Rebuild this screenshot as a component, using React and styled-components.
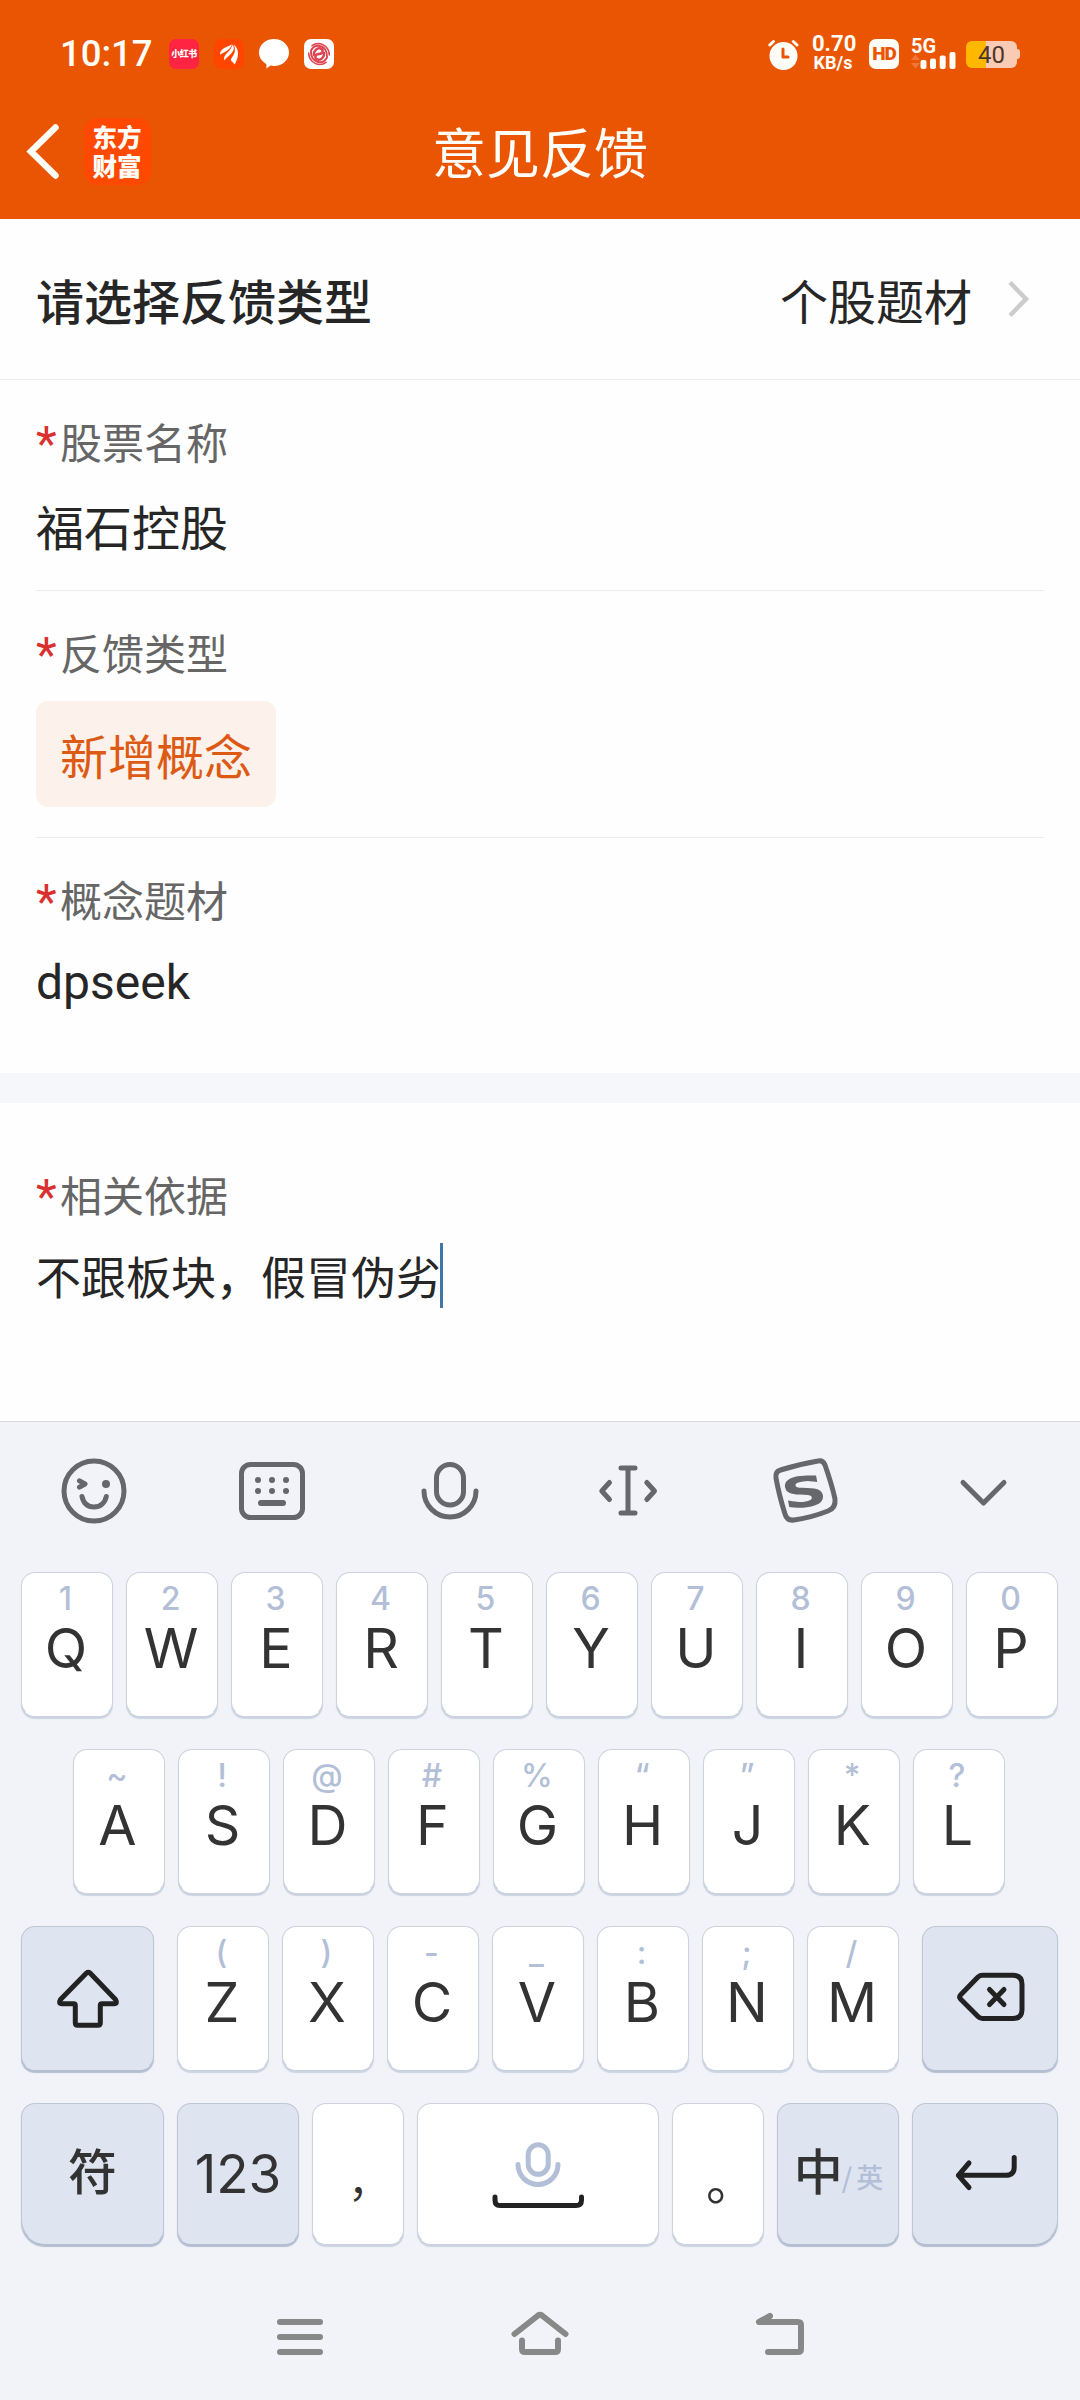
import styled, { createGlobalStyle, css } from 'styled-components';

const cjk = `'Noto Sans CJK SC', 'Noto Sans', sans-serif`;
const latin = `Roboto, 'Noto Sans CJK SC', sans-serif`;
const keyFont = `Inter, 'Noto Sans CJK SC', sans-serif`;

const GlobalStyle = createGlobalStyle`
  * {
    box-sizing: border-box;
  }
  body {
    margin: 0;
    font-family: ${cjk};
    background: #fff;
    color: #262626;
  }
  svg {
    display: block;
    flex: none;
  }
`;

const Screen = styled.div`
  display: flex;
  flex-direction: column;
  width: 1080px;
  height: 2400px;
  overflow: hidden;
  background: #fefefe;
`;

/* ---------- header ---------- */

const Header = styled.header`
  height: 219px;
  background: #ea5504;
  color: #fffdf8;
`;

const StatusBar = styled.div`
  display: flex;
  align-items: center;
  justify-content: space-between;
  height: 108px;
  padding: 0 60px 0 60px;
  font-family: ${latin};
`;

const StatusGroup = styled.div`
  display: flex;
  align-items: center;
  gap: ${({ $gap }) => $gap}px;
`;

const Clock = styled.span`
  width: 94px;
  font-size: 36.5px;
  font-weight: 500;
  line-height: 40px;
  white-space: nowrap;
`;

const AppBadge = styled.span`
  display: flex;
  align-items: center;
  justify-content: center;
  width: 30px;
  height: 30px;
  border-radius: 7px;
  background: ${({ $bg }) => $bg};
  font-family: ${cjk};
  font-size: 9px;
  font-weight: 900;
  letter-spacing: -0.5px;
  line-height: 30px;
  white-space: nowrap;
`;

const NetSpeed = styled.div`
  width: 42px;
  margin-top: -2px;
  font-size: 22px;
  font-weight: 700;
  line-height: 20px;
  text-align: center;
  white-space: nowrap;
`;

const NetUnit = styled.div`
  font-size: 18px;
  line-height: 18px;
`;

const HdBadge = styled(AppBadge)`
  font-family: ${latin};
  font-size: 19px;
  letter-spacing: -1px;
  color: #ea5504;
`;

const Signal = styled.div`
  width: 46px;
  height: 30px;
  font-size: 20px;
  font-weight: 700;
  line-height: 15px;
`;

const Battery = styled.div`
  display: flex;
  align-items: center;
`;

const BatteryBody = styled.div`
  width: 51px;
  height: 27px;
  border-radius: 6px;
  background: linear-gradient(90deg, #ffb800 40%, #f9cbb4 40%);
  color: #4d3629;
  font-size: 24px;
  line-height: 29px;
  text-align: center;
`;

const BatteryTip = styled.div`
  width: 3px;
  height: 10px;
  border-radius: 0 3px 3px 0;
  background: #f9cbb4;
`;

const NavBar = styled.div`
  display: grid;
  grid-template-columns: 1fr auto 1fr;
  align-items: center;
  height: 86px;
  padding: 0 24px;
`;

const NavLeft = styled.div`
  display: flex;
  align-items: center;
  gap: 20px;
`;

const Brand = styled.div`
  width: 67px;
  height: 67px;
  padding: 6px 1px 0 0;
  border-radius: 14px;
  background: #ff4800;
  font-family: ${latin};
  font-size: 24.5px;
  font-weight: 900;
  line-height: 29px;
  text-align: center;
`;

const Title = styled.h1`
  margin: 0;
  font-size: 54px;
  font-weight: 400;
  line-height: 80px;
`;

/* ---------- form ---------- */

const Form = styled.main`
  flex: 1;
`;

const TypeRow = styled.div`
  display: flex;
  align-items: center;
  height: 161px;
  padding: 0 45px 0 36px;
  border-bottom: 1px solid #ececec;
  font-size: 48px;
  line-height: 72px;
`;

const TypeName = styled.span`
  flex: 1;
  font-weight: 500;
`;

const TypeValue = styled.span`
  margin-right: 31px;
`;

const Field = styled.section`
  margin: 0 36px;
  padding: ${({ $pad }) => $pad};
  border-bottom: ${({ $line }) => ($line ? '1px solid #ececec' : 'none')};
`;

const Label = styled.div`
  display: flex;
  height: 60px;
  font-size: 42px;
  line-height: 60px;
  color: #666;

  &::before {
    content: '*';
    width: 24px;
    font-family: ${latin};
    font-size: 48px;
    line-height: 66px;
    color: #d93030;
  }
`;

const Value = styled.div`
  margin-top: 18px;
  font-size: 48px;
  line-height: 72px;
  font-family: ${({ $latin }) => ($latin ? latin : cjk)};
`;

const Chip = styled.button`
  display: block;
  height: 106px;
  margin: 19px 0 0;
  padding: 0 24px;
  border: none;
  border-radius: 12px;
  background: #fdf1eb;
  color: #dc5a14;
  font-family: ${cjk};
  font-size: 48px;
  line-height: 106px;
`;

const Band = styled.div`
  height: 30px;
  background: #f6f7fa;
`;

const Reason = styled.div`
  display: flex;
  height: 65px;
  margin-top: 19px;
  font-size: 45px;
  line-height: 65px;
`;

const Caret = styled.span`
  width: 3px;
  height: 65px;
  margin-left: -1px;
  background: #4275a8;
`;

/* ---------- keyboard ---------- */

const Keyboard = styled.div`
  height: 979px;
  border-top: 1px solid #d8dadf;
  background: #f1f3f8;
  font-family: ${keyFont};
  color: #333;
`;

const Toolbar = styled.div`
  display: grid;
  grid-template-columns: repeat(6, 178px);
  justify-items: center;
  height: 150px;
  padding: 33px 6px 0 5px;
`;

const Rows = styled.div`
  display: flex;
  flex-direction: column;
  gap: 33px;
  padding: 0 22px 0 21px;
`;

const Row = styled.div`
  display: flex;
  justify-content: center;
  gap: 13px;
  height: ${({ $short }) => ($short ? 141 : 144)}px;
  padding-right: ${({ $inset }) => $inset || 0}px;
`;

const Key = styled.div`
  display: flex;
  flex-direction: column;
  align-items: center;
  width: ${({ $w }) => $w || 92}px;
  border: 1px solid #cdd2dc;
  border-bottom-color: #fff;
  border-radius: 14px;
  background: #fff;
  box-shadow: 0 3px 1px #cbd3e1;

  ${({ $fn }) =>
    $fn &&
    css`
      justify-content: center;
      border-color: #bfc6d4;
      border-bottom-color: #dee4f0;
      background: #dee4f0;
      box-shadow: 0 3px 1px #b4bed1;
    `}
  ${({ $corner }) => $corner === 'left' && 'border-bottom-left-radius: 24px;'}
  ${({ $corner }) => $corner === 'right' && 'border-bottom-right-radius: 24px;'}
  ${({ $before }) => $before && `margin-left: ${$before}px;`}
`;

const Hint = styled.span`
  height: 46px;
  padding: 5px 3px 0 0;
  font-size: 32px;
  font-weight: 500;
  line-height: 42px;
  color: #b3bfd7;
`;

const Letter = styled.span`
  padding-right: 2px;
  font-size: 55.5px;
  line-height: 58px;
`;

const Digits = styled.span`
  font-size: 53px;
  line-height: 60px;
`;

const Han = styled.span`
  font-family: ${cjk};
  font-size: 49px;
  font-weight: 500;
  line-height: 70px;
  margin-top: -10px;
`;

const Punct = styled.span`
  margin: ${({ $m }) => $m};
  font-family: ${cjk};
  font-size: ${({ $size }) => $size}px;
  line-height: 60px;
`;

const Lang = styled.div`
  display: flex;
  align-items: baseline;
`;

const LangAlt = styled.span`
  font-family: ${cjk};
  font-size: 27px;
  font-weight: 500;
  letter-spacing: -1px;
  line-height: 40px;
  margin: 0 0 0 -1px;
  transform: translateY(-2px);
  color: #b3bfd7;
`;

const SystemNav = styled.nav`
  display: flex;
  justify-content: center;
  gap: 168px;
  padding-top: 56px;
`;

const Icon = ({ children, size = 72, color = '#66676b', w = 5 }) => (
  <svg
    width={size}
    height={size}
    viewBox={`0 0 ${size} ${size}`}
    fill='none'
    stroke={color}
    strokeWidth={w}
    strokeLinecap='round'
    strokeLinejoin='round'
  >
    {children}
  </svg>
);

const MicKeyIcon = styled.svg`
  margin-top: 30px;
`;

const row1 = ['Q1', 'W2', 'E3', 'R4', 'T5', 'Y6', 'U7', 'I8', 'O9', 'P0'];
const row2 = ['A~', 'S!', 'D@', 'F#', 'G%', 'H“', 'J”', 'K*', 'L?'];
const row3 = ['Z(', 'X)', 'C-', 'V_', 'B:', 'N;', 'M/'];

const LetterKey = ({ k, before }) => (
  <Key $before={before}>
    <Hint>{k[1]}</Hint>
    <Letter>{k[0]}</Letter>
  </Key>
);

const Status = () => (
  <StatusBar>
    <StatusGroup $gap={15}>
      <Clock>10:17</Clock>
      <AppBadge $bg='#ff2442'>小红书</AppBadge>
      <AppBadge $bg='#ff4500'>
        <svg width='30' height='30' viewBox='0 0 30 30' fill='#fff'>
          <path d='M6 15.500C5.500 10.500 12 8 18 5.500C16 11 11.500 12.500 6 15.500Z' />
          <path d='M10 21.500C9 15 16.500 13 18.800 5.500C22.500 12 15.500 15.500 10 21.500Z' />
          <path d='M20.500 25.500C19.500 23 16.500 22.500 17 20.500C18 17.500 23 14 20 5.500C26 11 24.500 19.500 20.500 25.500Z' />
        </svg>
      </AppBadge>
      <svg width='30' height='30' viewBox='0 0 30 30' fill='#fff'>
        <path d='M15 0C23.500 0 30 6 30 13.500S23.500 27 15 27C13.700 27 12.600 26.900 11.500 26.600L7.500 29.500L7.300 25C3 22.500 0 18.500 0 13.500C0 6 6.500 0 15 0Z' />
      </svg>
      <AppBadge $bg='#fff'>
        <svg width='24' height='24' viewBox='-12 -12 24 24' fill='none' stroke='#dd4450' strokeWidth='1.900' strokeLinecap='round'>
          {[0, 180].map((a) => (
            <g key={a} transform={`rotate(${a})`}>
              <path d='M0 0C4 0 5 -4.500 1.500 -5.500C-2 -6.500 -5.500 -3 -5.200 1' strokeWidth='2.400' />
              <path d='M8 2.500C8.500 -3 5 -7.800 -0.500 -8.300C-4 -8.500 -6.500 -6.500 -8 -3.500' />
              <path d='M10.300 1C10.500 -5 5.500 -10.300 -1 -10.500C-3.500 -10.500 -5.500 -9.500 -7 -8.300' strokeWidth='1.500' />
            </g>
          ))}
        </svg>
      </AppBadge>
    </StatusGroup>
    <StatusGroup $gap={13}>
      <Icon size={32} color='#fffdf8' w={3}>
        <circle cx='16.500' cy='18' r='12.500' fill='#fffdf8' />
        <path d='M2.800 7L6.500 3.500M30 7L26.300 3.500' />
        <path d='M16 11V19H21' stroke='#ea5504' />
      </Icon>
      <StatusGroup $gap={12}>
        <StatusGroup $gap={15}>
          <NetSpeed>
            0.70
            <NetUnit>KB/s</NetUnit>
          </NetSpeed>
          <HdBadge $bg='#fffdf8'>HD</HdBadge>
        </StatusGroup>
        <StatusGroup $gap={9}>
          <Signal>
            5G
            <svg width='46' height='15' viewBox='0 0 46 15' overflow='visible'>
              <path d='M0 6L4.500 0.500L9 6ZM0 9L4.500 14.500L9 9Z' fill='#f2763a' />
              <g fill='#fffdf8'>
                <rect x='9.500' y='6' width='6' height='9' rx='2' />
                <rect x='19' y='4.500' width='6' height='10.500' rx='2' />
                <rect x='28.700' y='1.500' width='6' height='13.500' rx='2' />
                <rect x='38.500' y='-2' width='6' height='17' rx='2' />
              </g>
            </svg>
          </Signal>
          <Battery>
            <BatteryBody>40</BatteryBody>
            <BatteryTip />
          </Battery>
        </StatusGroup>
      </StatusGroup>
    </StatusGroup>
  </StatusBar>
);

const App = () => (
  <Screen>
    <GlobalStyle />
    <Header>
      <Status />
      <NavBar>
        <NavLeft>
          <svg width='40' height='60' viewBox='0 0 40 60' fill='none' stroke='#fffdf8' strokeWidth='6.500' strokeLinecap='round'>
            <path d='M31.500 6.500L7 30.500L31.500 54.500' />
          </svg>
          <Brand>
            东方
            <br />
            财富
          </Brand>
        </NavLeft>
        <Title>意见反馈</Title>
      </NavBar>
    </Header>

    <Form>
      <TypeRow>
        <TypeName>请选择反馈类型</TypeName>
        <TypeValue>个股题材</TypeValue>
        <svg width='32' height='40' viewBox='0 0 32 40' fill='none' stroke='#ccc' strokeWidth='4.500'>
          <path d='M7 3.500L23 20L7 36.500' />
        </svg>
      </TypeRow>
      <Field $pad='31px 0 29px' $line>
        <Label>股票名称</Label>
        <Value>福石控股</Value>
      </Field>
      <Field $pad='31px 0 30px' $line>
        <Label>反馈类型</Label>
        <Chip>新增概念</Chip>
      </Field>
      <Field $pad='31px 0 54px'>
        <Label>概念题材</Label>
        <Value $latin>dpseek</Value>
      </Field>
      <Band />
      <Field $pad='61px 0 0'>
        <Label>相关依据</Label>
        <Reason>
          不跟板块，假冒伪劣
          <Caret />
        </Reason>
      </Field>
    </Form>

    <Keyboard>
      <Toolbar>
        <Icon>
          <circle cx='36' cy='36' r='30' />
          <circle cx='48' cy='29' r='4' fill='#66676b' stroke='none' />
          <path d='M21.500 25.800L27 29L21.500 32.200' />
          <path d='M24 41.500C25.500 48.500 30 52 36 52S46.800 48.500 48.300 41.500' />
        </Icon>
        <Icon>
          <rect x='5.500' y='9.500' width='61' height='53' rx='9' />
          <path d='M22 25h.01M36 25h.01M50 25h.01M22 36h.01M36 36h.01M50 36h.01M25 48H47' strokeWidth='6' />
        </Icon>
        <Icon>
          <rect x='22.500' y='9.500' width='27' height='40.500' rx='13.500' />
          <path d='M10 36A26 26 0 0 0 62 36' />
        </Icon>
        <Icon>
          <path d='M29 13H43M29 58H43M36 13V58M17.500 27.500L9.800 36L17.500 44.500M54.800 27.500L62.500 36L54.800 44.500' />
        </Icon>
        <Icon>
          <path d='M10.500 15Q30 9 48 6Q53 5 55 10Q62 30 65 44Q66 53 58 56Q40 63 24 65Q17 66 15 59Q9 40 6 23Q5 16.500 10.500 15Z' />
          <text
            transform='translate(37 51.500) rotate(-7) skewX(4) scale(1.480 1)'
            textAnchor='middle'
            fontFamily='DejaVu Sans'
            fontWeight='700'
            fontSize='42'
            fill='#66676b'
            stroke='none'
          >
            S
          </text>
        </Icon>
        <Icon>
          <path d='M15 27.500L35.500 48L56 27.500' />
        </Icon>
      </Toolbar>

      <Rows>
        <Row>
          {row1.map((k) => (
            <LetterKey key={k} k={k} />
          ))}
        </Row>
        <Row $inset={2}>
          {row2.map((k) => (
            <LetterKey key={k} k={k} />
          ))}
        </Row>
        <Row>
          <Key $fn $w={133}>
            <Icon color='#222'>
              <path d='M34.500 11Q36.200 9.500 38 11L63.500 37.500Q66 41.700 62 41.700H50Q48.300 41.700 48.300 43.400V61Q48.300 63.300 46 63.300H25.600Q23.300 63.300 23.300 61V43.400Q23.300 41.700 21.600 41.700H10Q6 41.700 8.500 37.500Z' />
            </Icon>
          </Key>
          {row3.map((k, i) => (
            <LetterKey key={k} k={k} before={i === 0 ? 10 : 0} />
          ))}
          <Key $fn $w={136} $before={10}>
            <Icon color='#222'>
              <path d='M28.500 13.200H59Q68 13.200 68 22.500V47.500Q68 56.500 59 56.500H28.500Q26 56.500 24 54.500L6.500 37Q4.800 35 6.500 33L24 15Q26 13.200 28.500 13.200Z' />
              <path d='M35.500 27.500L50 42.500M50 27.500L35.500 42.500' />
            </Icon>
          </Key>
        </Row>
        <Row $short>
          <Key $fn $w={143} $corner='left'>
            <Han>符</Han>
          </Key>
          <Key $fn $w={122}>
            <Digits>123</Digits>
          </Key>
          <Key>
            <Punct $size={42} $m='45px 0 0 22px'>，</Punct>
          </Key>
          <Key $w={242}>
            <MicKeyIcon width='92' height='78' viewBox='0 -6 92 78' fill='none' stroke='#b3bfd7' strokeWidth='5' strokeLinecap='round'>
              <rect x='36.200' y='4.800' width='20' height='29.500' rx='10' />
              <path d='M26 24.500A20 20 0 0 0 66 24.500' />
              <path d='M3 57V60Q3 65.600 8 65.600H84Q89.500 65.600 89.500 60V57' stroke='#222' />
            </MicKeyIcon>
          </Key>
          <Key>
            <Punct $size={50} $m='44px 0 0 26px'>。</Punct>
          </Key>
          <Key $fn $w={122}>
            <Lang>
              <Han>中</Han>
              <LangAlt>/ 英</LangAlt>
            </Lang>
          </Key>
          <Key $fn $w={146} $corner='right'>
            <Icon color='#222'>
              <path d='M20 25L9.400 37.300L20 49.500M9.400 37.300H57Q65.200 37.300 65.200 29V19.500' />
            </Icon>
          </Key>
        </Row>
      </Rows>

      <SystemNav>
        <Icon color='#888' w={6}>
          <path d='M16 22H56M16 37H56M16 52H56' />
        </Icon>
        <Icon color='#888' w={6}>
          <path d='M10.500 34L34 15.500Q36 14 38 15.500L61.500 34M18 40.500V49Q18 52 21 52H51Q54 52 54 49V40.500' />
        </Icon>
        <Icon color='#888' w={6}>
          <path d='M26 16L15 22H54Q57 22 57 25V49Q57 52 54 52H24' />
        </Icon>
      </SystemNav>
    </Keyboard>
  </Screen>
);

export default App;
